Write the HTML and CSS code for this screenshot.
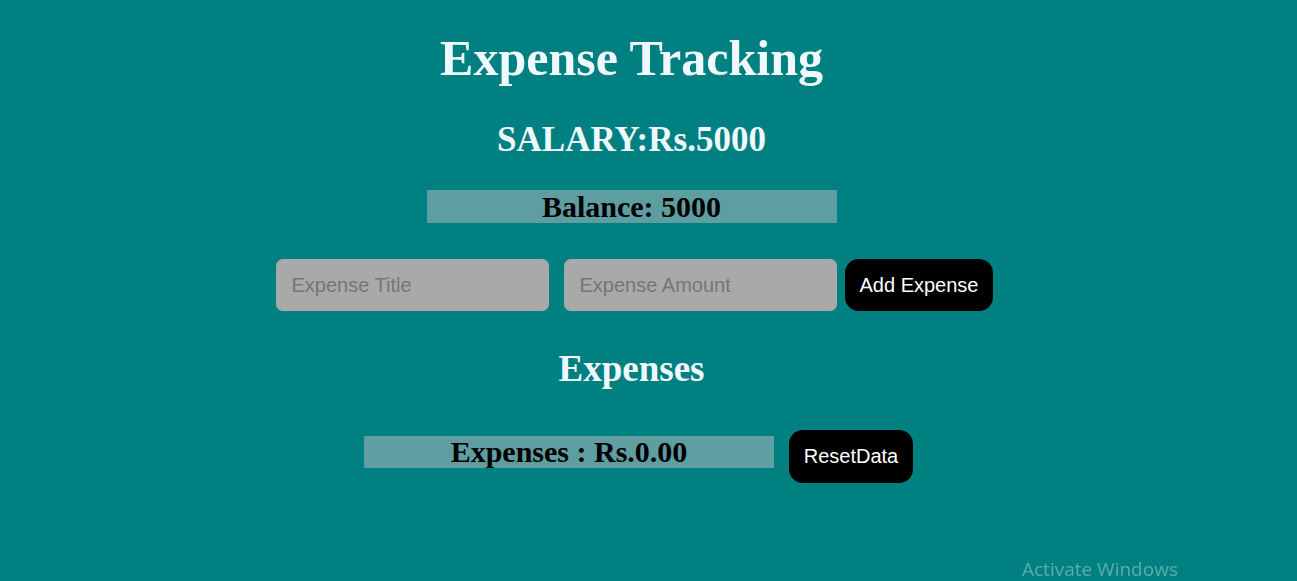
FILE: index.html
```html
<!DOCTYPE html>
<html lang="en">
<head>
<meta charset="utf-8">
<title>Expense Tracking</title>
<link rel="stylesheet" href="styles.css">
</head>
<body>
<main class="app">
  <h1 class="title">Expense Tracking</h1>
  <h2 class="salary">SALARY:Rs.5000</h2>
  <div class="balance">Balance: 5000</div>
  <form class="entry">
    <input class="field field-title" type="text" placeholder="Expense Title">
    <input class="field field-amount" type="text" placeholder="Expense Amount">
    <button class="btn" type="button">Add Expense</button>
  </form>
  <h2 class="list-title">Expenses</h2>
  <div class="totals">
    <div class="total-box">Expenses : Rs.0.00</div>
    <button class="btn btn-reset" type="button">ResetData</button>
  </div>
</main>
<div class="watermark">Activate Windows</div>
</body>
</html>
```

FILE: styles.css
```css
html, body {
  margin: 0;
  padding: 0;
  background: #008080;
  height: 100%;
  overflow: hidden;
}

body {
  font-family: "Liberation Serif", "DejaVu Serif", serif;
}

.app {
  padding-right: 34px;
  padding-top: 28px;
  display: flex;
  flex-direction: column;
  align-items: center;
}

.title {
  margin: 0;
  color: #f0f8ff;
  font-size: 50px;
  line-height: 60px;
  font-weight: bold;
}

.salary {
  margin: 32px 0 0;
  color: #f0f8ff;
  font-size: 35px;
  line-height: 40px;
  font-weight: bold;
}

.balance {
  margin-top: 30px;
  width: 410px;
  height: 33px;
  background: #5f9ea0;
  color: #000;
  font-size: 30px;
  line-height: 33px;
  font-weight: bold;
  text-align: center;
}

.entry {
  margin: 36px 0 0;
  padding-left: 6px;
  display: flex;
  align-items: center;
}

.field {
  width: 273px;
  height: 52px;
  box-sizing: border-box;
  border: none;
  border-radius: 7px;
  background: #a9a9a9;
  padding: 0 16px;
  font-family: "Liberation Sans", Arial, sans-serif;
  font-size: 20px;
  color: #333;
  outline: none;
}

.field::placeholder {
  color: #767676;
}

.field-title {
  margin-right: 15px;
}

.field-amount {
  margin-right: 8px;
}

.btn {
  height: 52px;
  border: none;
  border-radius: 14px;
  background: #000;
  color: #fff;
  font-family: "Liberation Sans", Arial, sans-serif;
  font-size: 20px;
  padding: 0 15px;
  cursor: pointer;
}

.list-title {
  margin: 36px 0 0;
  color: #f0f8ff;
  font-size: 37px;
  line-height: 44px;
  font-weight: bold;
}

.totals {
  margin-top: 39px;
  padding-left: 14px;
  display: flex;
  align-items: flex-start;
  gap: 15px;
}

.total-box {
  margin-top: 6px;
  width: 410px;
  height: 32px;
  background: #5f9ea0;
  color: #000;
  font-size: 30px;
  line-height: 32px;
  font-weight: bold;
  text-align: center;
}

.btn-reset {
  height: 53px;
  width: 124px;
  padding: 0;
}

.watermark {
  position: fixed;
  left: 1022px;
  top: 560px;
  font-family: "Open Sans", "Noto Sans", sans-serif;
  font-size: 19px;
  line-height: 19px;
  color: rgba(255, 255, 255, 0.35);
  white-space: nowrap;
}
```
